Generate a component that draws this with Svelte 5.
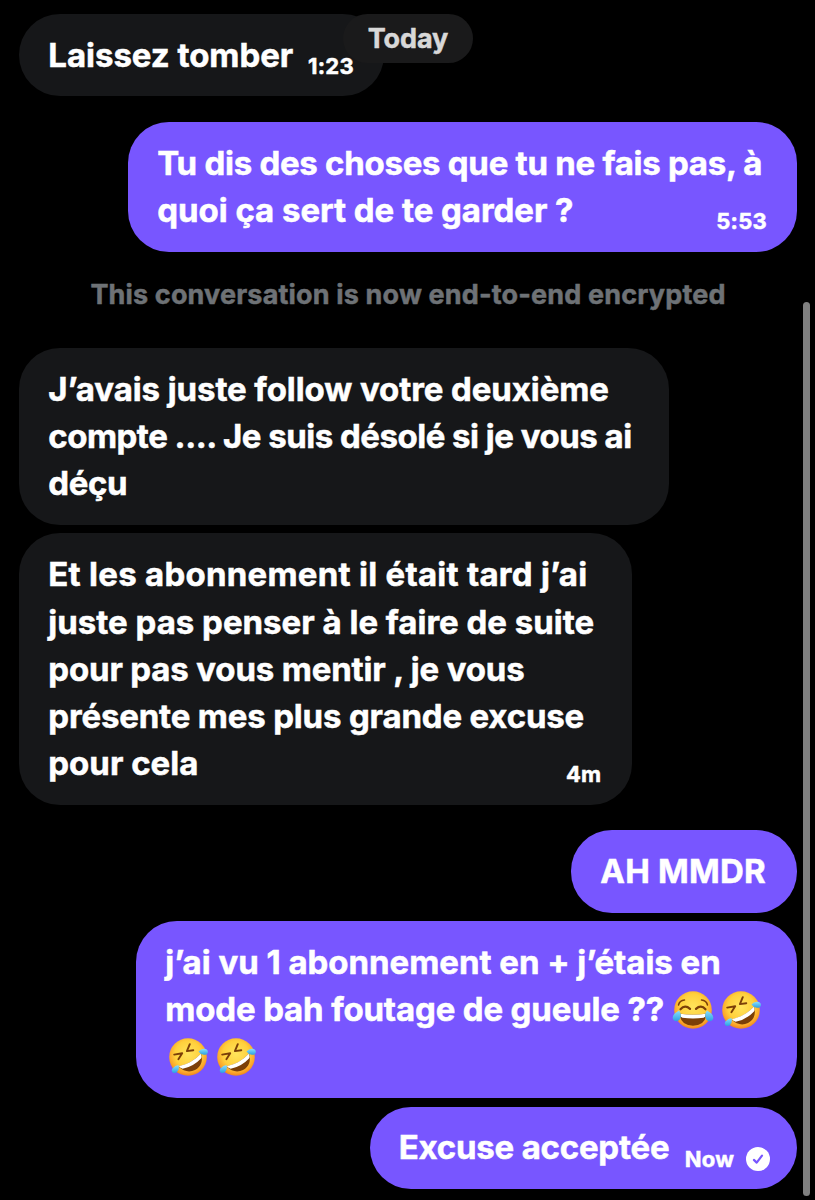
<script lang="ts">
  type Line = { text: string; track: number; emoji?: string[] };
  type Message = {
    id: number;
    mine: boolean;
    width: number;
    lines: Line[];
    time?: string;
    sent?: boolean;
    startsGroup?: boolean;
  };

  const earlier: Message[] = [
    { id: 1, mine: false, width: 365, time: "1:23", lines: [{ text: "Laissez tomber", track: -0.04 }] },
    {
      id: 2,
      mine: true,
      width: 669,
      time: "5:53",
      startsGroup: true,
      lines: [
        { text: "Tu dis des choses que tu ne fais pas, à", track: -0.27 },
        { text: "quoi ça sert de te garder ?", track: -0.05 },
      ],
    },
  ];

  const recent: Message[] = [
    {
      id: 3,
      mine: false,
      width: 650,
      lines: [
        { text: "J’avais juste follow votre deuxième", track: -0.09 },
        { text: "compte .... Je suis désolé si je vous ai", track: -0.5 },
        { text: "déçu", track: -0.4 },
      ],
    },
    {
      id: 4,
      mine: false,
      width: 612.5,
      time: "4m",
      lines: [
        { text: "Et les abonnement il était tard j’ai", track: 0.26 },
        { text: "juste pas penser à le faire de suite", track: 0 },
        { text: "pour pas vous mentir , je vous", track: -0.16 },
        { text: "présente mes plus grande excuse", track: -0.17 },
        { text: "pour cela", track: 0 },
      ],
    },
    { id: 5, mine: true, width: 226, startsGroup: true, lines: [{ text: "AH MMDR", track: 0.2 }] },
    {
      id: 6,
      mine: true,
      width: 661,
      lines: [
        { text: "j’ai vu 1 abonnement en + j’étais en", track: -0.03 },
        { text: "mode bah foutage de gueule ??", track: -0.16, emoji: ["joy", "rofl"] },
        { text: "", track: 0, emoji: ["rofl", "rofl"] },
      ],
    },
    {
      id: 7,
      mine: true,
      width: 427.5,
      time: "Now",
      sent: true,
      lines: [{ text: "Excuse acceptée", track: -0.23 }],
    },
  ];
</script>

<svg class="defs" aria-hidden="true">
  <defs>
    <radialGradient id="face" cx="50%" cy="42%" r="58%">
      <stop offset="0" stop-color="#ffe45c" />
      <stop offset="0.6" stop-color="#ffd03c" />
      <stop offset="0.86" stop-color="#fba62a" />
      <stop offset="1" stop-color="#ee8420" />
    </radialGradient>
    <linearGradient id="tear" x1="0" y1="0" x2="0" y2="1">
      <stop offset="0" stop-color="#8be0fb" />
      <stop offset="1" stop-color="#2a9fe4" />
    </linearGradient>
  </defs>
</svg>

{#snippet face(kind: string)}
  {#if kind === "joy"}
    <svg class="emoji" viewBox="0 0 42 40" role="img" aria-label="😂">
      <circle cx="21" cy="20" r="18.8" fill="url(#face)" />
      <path d="M6.5 15q1-4.5 6-5M35.5 15q-1-4.5-6-5" class="brow" />
      <path d="M8.5 19.3q4.5-5 9.5-.4M24 18.900q5-4.6 9.5.4" class="eye" />
      <path d="M7.5 23.5q13.5 2.500 27 0q-1 12.200-13.5 12.200t-13.5-12.200z" fill="#7b3f08" />
      <path d="M8.4 23.7q12.6 2.200 25.200 0q.2 3.200-2 4.100q-10.600 1.500-21.200 0q-2.200-.9-2-4.100z" fill="#fff" />
      <path d="M7 20.5q2.800 3.500 1.400 7.600q-1.200 3.200-4.400 3.200q-3.400-.6-3.300-3.900q.3-3.700 6.300-6.900z" fill="url(#tear)" />
      <path d="M35 20.5q-2.800 3.500-1.400 7.600q1.200 3.200 4.400 3.200q3.400-.6 3.300-3.900q-.3-3.700-6.300-6.900z" fill="url(#tear)" />
    </svg>
  {:else}
    <svg class="emoji" viewBox="0 0 42 40" role="img" aria-label="🤣">
      <circle cx="21" cy="20" r="18.8" fill="url(#face)" />
      <path d="M7.2 17.6l8-1.300l-3.800 6" class="squint" />
      <path d="M22.8 7.2l-2.900 6.900l6.400-.9" class="squint" />
      <path d="M11.5 29.5q14-3.300 22.500-13q3.300 11.500-6 16.500q-8.500 4-16.500-3.500z" fill="#7b3f08" />
      <path d="M11.8 29.3q13.500-3.300 22-12.600q1.300 3.200.2 4.800q-7.600 8.200-18.300 10.200q-2.500-.4-3.900-2.400z" fill="#fff" />
      <path d="M31.5 14.5q2.500-3.200 6.400-2.700q3.200.8 3 3.400q-.6 2.800-4 2.600q-3.600-.4-5.400-3.300z" fill="url(#tear)" />
      <path d="M11.5 28q1.200 4-1.300 6.800q-2.300 2.100-4.500.6q-1.900-2 0-4.200q2.400-2.600 5.800-3.200z" fill="url(#tear)" />
    </svg>
  {/if}
{/snippet}

{#snippet bubble(msg: Message)}
  <div class="bubble" class:mine={msg.mine} class:group={msg.startsGroup} style="width:{msg.width}px">
    <div class="text">
      {#each msg.lines as line}
        <div class="line">
          {#if line.text}<span style="letter-spacing:{line.track}px">{line.text}</span>{/if}
          {#if line.emoji}
            <span class="emojis" class:lead={!line.text}>
              {#each line.emoji as kind}{@render face(kind)}{/each}
            </span>
          {/if}
        </div>
      {/each}
    </div>
    {#if msg.time}
      <div class="meta" class:sent={msg.sent}>
        <span>{msg.time}</span>
        {#if msg.sent}
          <svg class="check" viewBox="0 0 24 24" aria-hidden="true">
            <circle cx="12" cy="12" r="12" fill="#fff" />
            <path d="M7.9 12.9l2.800 2.700l5.300-7" />
          </svg>
        {/if}
      </div>
    {/if}
  </div>
{/snippet}

<main class="chat">
  {#each earlier as msg (msg.id)}
    {@render bubble(msg)}
  {/each}
  <div class="notice">This conversation is now end-to-end encrypted</div>
  {#each recent as msg (msg.id)}
    {@render bubble(msg)}
  {/each}

  <div class="day">Today</div>
  <div class="scrollbar"></div>
</main>

<style>
  :global(body) {
    background: #000;
  }
  .defs {
    position: absolute;
    width: 0;
    height: 0;
  }
  .chat {
    position: relative;
    box-sizing: border-box;
    width: 815px;
    height: 1200px;
    overflow: hidden;
    padding: 14px 18px 0 19px;
    display: flex;
    flex-direction: column;
    align-items: flex-start;
    background: #000;
    color: #fff;
    font-family: Inter, "Liberation Sans", sans-serif;
    font-weight: 700;
    -webkit-text-stroke: 0.5px currentColor;
  }
  .bubble {
    box-sizing: border-box;
    flex-shrink: 0;
    display: grid;
    padding: 17.9px 30px 17.3px 29.3px;
    border-radius: 41px;
    background: #161719;
  }
  .bubble + .bubble { margin-top: 8.6px; }
  .bubble.mine {
    align-self: flex-end;
    background: #7856ff;
  }
  .bubble.group { margin-top: 25.6px; }
  .text, .meta { grid-area: 1 / 1; }
  .line {
    display: flex;
    align-items: center;
    height: 47.2px;
    font-size: 33px;
    line-height: 47.2px;
    white-space: nowrap;
  }
  .emojis {
    display: flex;
    gap: 6.2px;
    margin-left: 8px;
  }
  .emojis.lead { margin-left: 2px; }
  .emoji {
    display: block;
    width: 42px;
    height: 40px;
  }
  .brow, .eye, .squint {
    fill: none;
    stroke: #7b3f08;
    stroke-linecap: round;
    stroke-linejoin: round;
  }
  .brow { stroke-width: 1.5; }
  .eye { stroke-width: 2.2; }
  .squint { stroke-width: 1.9; }
  .meta {
    justify-self: end;
    align-self: end;
    display: flex;
    align-items: center;
    gap: 12px;
    height: 22px;
    margin-bottom: 2px;
    font-size: 22px;
    line-height: 22px;
    letter-spacing: 0.3px;
  }
  .meta.sent { margin-right: -3.3px; }
  .check {
    width: 24px;
    height: 24px;
  }
  .check path {
    fill: none;
    stroke: #7856ff;
    stroke-width: 2.2;
    stroke-linecap: round;
    stroke-linejoin: round;
  }
  .notice {
    align-self: center;
    flex-shrink: 0;
    height: 96.6px;
    font-size: 27px;
    line-height: 86px;
    letter-spacing: 0.16px;
    color: #6e7276;
    white-space: nowrap;
  }
  .day {
    position: absolute;
    top: 14px;
    left: 343px;
    width: 130px;
    height: 49px;
    border-radius: 25px;
    background: #1a1a1b;
    color: #d8d8d8;
    font-size: 27px;
    line-height: 50px;
    letter-spacing: -0.1px;
    text-align: center;
  }
  .scrollbar {
    position: absolute;
    top: 302px;
    right: 5px;
    width: 7px;
    height: 894px;
    border-radius: 4px;
    background: #808080;
  }
</style>
